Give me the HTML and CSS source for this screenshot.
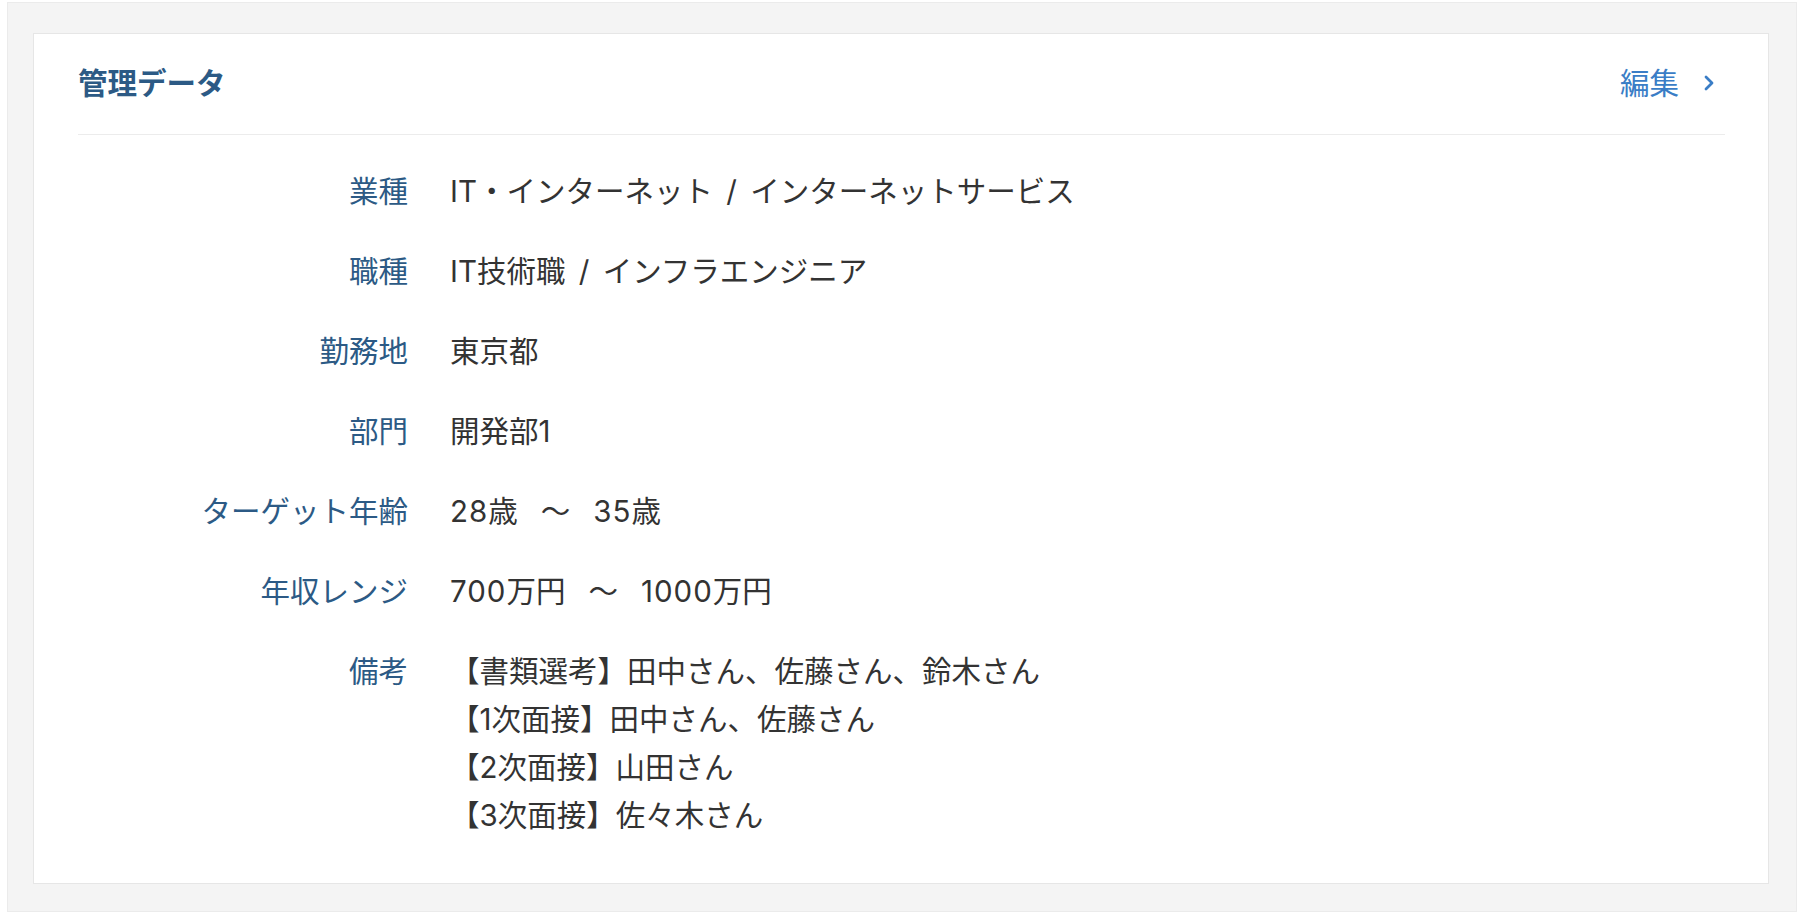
FILE: index.html
```html
<!DOCTYPE html>
<html lang="ja">

<head>
    <meta charset="utf-8">
    <meta name="viewport" content="width=device-width, initial-scale=1.0">
    <title>管理データ</title>
    <link rel="stylesheet" href="styles.css">
</head>

<body>
    <div class="wrap">
        <section class="card">
            <header class="card-head">
                <h1>管理データ</h1>
                <a class="edit" href="#">編集
                    <svg width="12" height="18" viewBox="0 0 12 18">
                        <polyline points="3,3 9,9 3,15" fill="none" stroke="currentColor" stroke-width="2.8" stroke-linecap="round" stroke-linejoin="round" />
                    </svg>
                </a>
            </header>

            <dl class="data">
                <dt>業種</dt>
                <dd>IT・インターネット / インターネットサービス</dd>

                <dt>職種</dt>
                <dd>IT技術職 / インフラエンジニア</dd>

                <dt>勤務地</dt>
                <dd>東京都</dd>

                <dt>部門</dt>
                <dd>開発部1</dd>

                <dt>ターゲット年齢</dt>
                <dd><span class="num">28</span>歳<span class="tilde">〜</span><span class="num">35</span>歳</dd>

                <dt>年収レンジ</dt>
                <dd><span class="num">700</span>万円<span class="tilde">〜</span><span class="num">1000</span>万円</dd>

                <dt>備考</dt>
                <dd>【書類選考】田中さん、佐藤さん、鈴木さん<br>【1次面接】田中さん、佐藤さん<br>【2次面接】山田さん<br>【3次面接】佐々木さん</dd>
            </dl>
        </section>
    </div>
</body>

</html>
```

FILE: styles.css
```css
body {
    margin: 0;
    background-color: #fff;
    font-family: Inter, "Noto Sans CJK JP", sans-serif;
    font-size: 29.5px;
    line-height: 48px;
    color: #333;
}

.wrap {
    margin: 2px 5px 5px 7px;
    padding: 30px 27px 27px 25px;
    background-color: #f4f4f4;
    border: 1px solid #ebebeb;
}

.card {
    background-color: #fff;
    border: 1px solid #e6e6e6;
    padding: 0 43px 44px 44px;
}

.card-head {
    display: flex;
    justify-content: space-between;
    align-items: center;
    padding: 25px 0 27px;
    border-bottom: 1px solid #ececec;
}

h1 {
    margin: 0;
    font-size: 29.5px;
    font-weight: bold;
    color: #2c5a85;
}

.edit {
    display: flex;
    align-items: center;
    gap: 24px;
    padding-right: 10px;
    color: #3a7dc6;
    text-decoration: none;
}

.data {
    display: grid;
    grid-template-columns: 330px 1fr;
    column-gap: 42px;
    row-gap: 32px;
    margin: 0;
    padding-top: 32px;
    word-spacing: 5px;
}

dt {
    text-align: right;
    color: #2c5a85;
}

dd {
    margin: 0;
}

.num {
    letter-spacing: 1px;
}

.tilde {
    margin: 0 23px;
}
```
